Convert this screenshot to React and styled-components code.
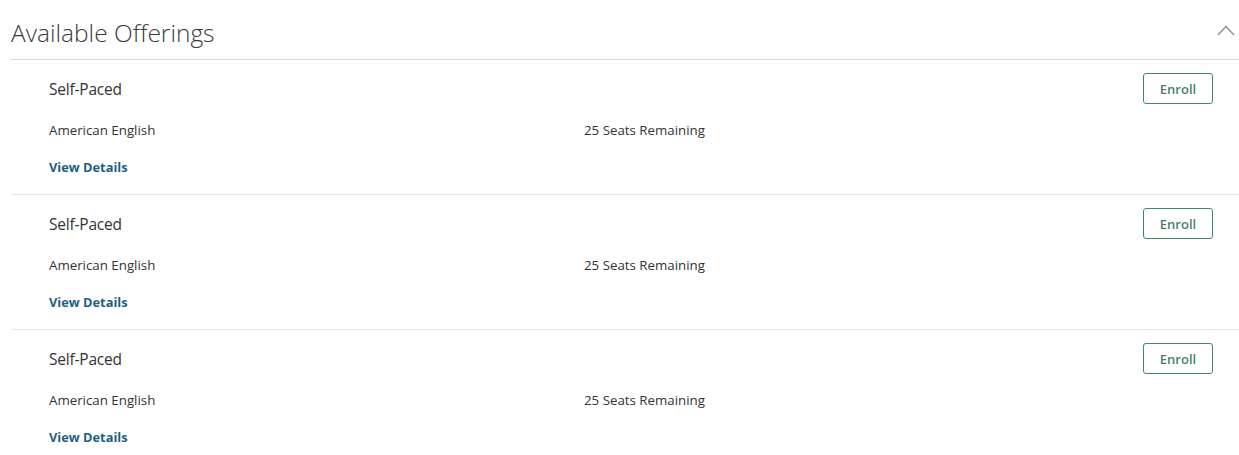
import styled, { createGlobalStyle } from 'styled-components'

const GlobalStyle = createGlobalStyle`
  body {
    margin: 0;
    background: #fff;
    font-family: 'Open Sans', 'Noto Sans', sans-serif;
    color: #333;
  }
`

const Section = styled.section`
  padding-left: 11px;
`

const Header = styled.div`
  display: flex;
  align-items: center;
  justify-content: space-between;
  height: 59px;
  border-bottom: 1px solid #d8dde2;
`

const Title = styled.h2`
  margin: 0;
  margin-top: 5px;
  font-size: 24.5px;
  font-weight: 300;
  color: #3b3b3b;
`

const Toggle = styled.button`
  border: 0;
  background: none;
  padding: 0;
  margin-right: 4px;
  margin-top: 1px;
  display: flex;
  cursor: pointer;
`

const Row = styled.div`
  padding: 13px 26px 17px 38px;
  border-bottom: 1px solid #e8e8e8;
`

const TopLine = styled.div`
  display: flex;
  align-items: center;
  justify-content: space-between;
  height: 31px;
`

const Name = styled.span`
  font-size: 15.5px;
  color: #333;
  letter-spacing: -0.2px;
`

const EnrollButton = styled.button`
  width: 70px;
  height: 31px;
  border: 1px solid #3f8a62;
  border-radius: 3px;
  background: #fff;
  color: #4a7f6a;
  font-family: inherit;
  font-size: 13px;
  font-weight: 600;
  cursor: pointer;
`

const Meta = styled.div`
  display: grid;
  grid-template-columns: 535px 1fr;
  margin-top: 16px;
  line-height: 20px;
  font-size: 13.3px;
  color: #333;
`

const DetailsLink = styled.a`
  display: block;
  margin-top: 17px;
  line-height: 20px;
  font-size: 12.8px;
  font-weight: 700;
  color: #1e5f82;
  text-decoration: none;
`

const offerings = [
  { id: 1, name: 'Self-Paced', language: 'American English', seats: 25 },
  { id: 2, name: 'Self-Paced', language: 'American English', seats: 25 },
  { id: 3, name: 'Self-Paced', language: 'American English', seats: 25 }
]

const Offering = ({ item }) => (
  <Row>
    <TopLine>
      <Name>{item.name}</Name>
      <EnrollButton>Enroll</EnrollButton>
    </TopLine>
    <Meta>
      <span>{item.language}</span>
      <span>{item.seats} Seats Remaining</span>
    </Meta>
    <DetailsLink href='#'>View Details</DetailsLink>
  </Row>
)

export default function App () {
  return (
    <>
      <GlobalStyle />
      <Section>
        <Header>
          <Title>Available Offerings</Title>
          <Toggle aria-label='Collapse'>
            <svg width='18' height='11' viewBox='0 0 18 11' fill='none'>
              <polyline points='1,10 9,1.5 17,10' stroke='#8a8a8a' strokeWidth='1.3' />
            </svg>
          </Toggle>
        </Header>
        {offerings.map(item => <Offering key={item.id} item={item} />)}
      </Section>
    </>
  )
}
